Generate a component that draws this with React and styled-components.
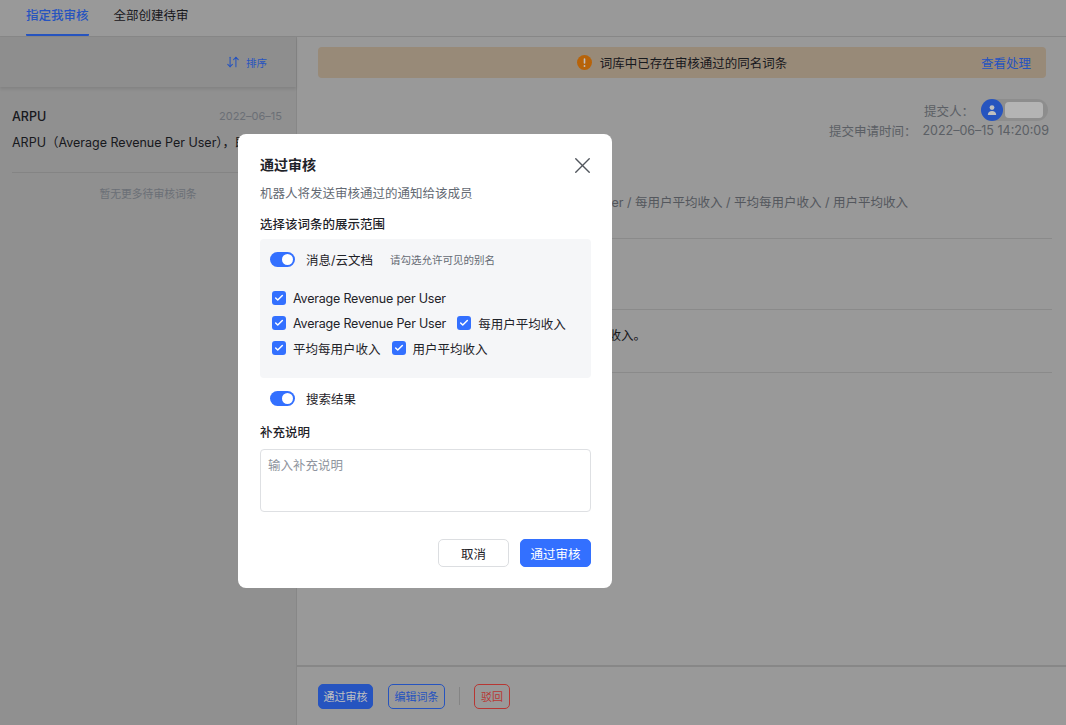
import React from "react";
import styled, { createGlobalStyle } from "styled-components";
import { X, Check, ArrowDownUp } from "lucide-react";

const Global = createGlobalStyle`
  html, body { margin: 0; padding: 0; height: 100%; background: #ccc; }
  body { font-family: "Inter", "Noto Sans CJK SC", "Liberation Sans", sans-serif; color: #1f2329; }
  * { box-sizing: border-box; }
`;

const Page = styled.div`
  width: 1066px;
  height: 725px;
  overflow: hidden;
  position: relative;
  display: flex;
  flex-direction: column;
  background: #ccc;
`;
const Header = styled.header`
  height: 37px;
  flex: none;
  display: flex;
  gap: 25px;
  padding-left: 26px;
  border-bottom: 1px solid #b4b4b4;
`;
const Tab = styled.div`
  height: 36px;
  padding-top: 7px;
  font-size: 12.5px;
  line-height: 17px;
  color: ${(p) => (p.$active ? "#3370ff" : "#1f2329")};
  font-weight: ${(p) => (p.$active ? 500 : 400)};
  border-bottom: 2px solid ${(p) => (p.$active ? "#3370ff" : "transparent")};
  border-radius: 0 0 1px 1px;
`;
const Body = styled.div`
  flex: 1;
  display: flex;
  min-height: 0;
`;
const Sidebar = styled.aside`
  width: 297px;
  flex: none;
  background: #c0c0c0;
  border-right: 1px solid #b4b4b4;
`;
const SortBar = styled.div`
  height: 50px;
  display: flex;
  justify-content: flex-end;
  align-items: center;
  gap: 6px;
  padding-right: 29px;
  color: #3370ff;
  font-size: 10.5px;
  background: #bebebe;
  box-shadow: 0 2px 3px rgba(0, 0, 0, 0.1);
`;
const Entry = styled.div`
  margin: 0 14px 0 12px;
  padding-top: 20px;
  height: 86px;
  border-bottom: 1px solid #b0b0b0;
`;
const EntryTop = styled.div`
  display: flex;
  justify-content: space-between;
  align-items: center;
  height: 18px;
`;
const EntryName = styled.span`
  font-size: 12.5px;
  font-weight: 500;
`;
const EntryDate = styled.span`
  font-size: 11px;
  color: #8f959e;
`;
const EntryDesc = styled.div`
  margin-top: 9px;
  font-size: 12.5px;
  line-height: 18px;
  white-space: nowrap;
`;
const NoMore = styled.div`
  text-align: center;
  font-size: 10.8px;
  color: #8f959e;
  margin-top: 12px;
`;
const Main = styled.main`
  flex: 1;
  min-width: 0;
  display: flex;
  flex-direction: column;
`;
const Content = styled.div`
  flex: 1;
  padding: 10px 20px 0 21px;
`;
const Alert = styled.div`
  height: 31px;
  border-radius: 4px;
  background: #cbb8a1;
  display: flex;
  align-items: center;
  justify-content: center;
  position: relative;
  gap: 8px;
  font-size: 12.5px;
`;
const AlertLink = styled.a`
  position: absolute;
  right: 15px;
  color: #3370ff;
`;
const Meta = styled.div`
  display: flex;
  flex-direction: column;
  align-items: flex-end;
  margin-top: 21px;
  margin-right: -3px;
  font-size: 12.5px;
  color: #7a7f87;
`;
const MetaRow = styled.div`
  display: flex;
  align-items: center;
  height: ${(p) => p.$h}px;
  gap: ${(p) => p.$gap}px;
`;
const Submitter = styled.div`
  width: 67px;
  height: 22px;
  margin-right: 1px;
  border-radius: 11px;
  background: #bdbdbd;
  display: flex;
  align-items: center;
  gap: 2px;
  padding-right: 5px;
`;
const Avatar = styled.div`
  width: 22px;
  height: 22px;
  border-radius: 50%;
  background: #3370ff;
  display: flex;
  align-items: center;
  justify-content: center;
  flex: none;
`;
const Redacted = styled.div`
  flex: 1;
  height: 16px;
  border-radius: 4px;
  background: #f1f1f1;
`;
const Field = styled.div`
  height: ${(p) => p.$h}px;
  margin-right: -6px;
  border-bottom: 1px solid #b8b8b8;
  display: flex;
  justify-content: flex-end;
  white-space: nowrap;
  font-size: 12.5px;
  line-height: 18px;
  color: ${(p) => p.$color || "#1f2329"};
  padding-top: ${(p) => p.$top || 0}px;
  padding-right: ${(p) => p.$right || 0}px;
`;
const Footer = styled.footer`
  height: 60px;
  flex: none;
  border-top: 2px solid #b4b4b4;
  display: flex;
  align-items: center;
  padding: 0 0 0 21px;
`;
const FootBtn = styled.button`
  height: 25px;
  padding: 0;
  width: ${(p) => p.$w}px;
  margin-left: ${(p) => p.$ml || 0}px;
  border-radius: 5px;
  font: inherit;
  font-size: 11px;
  background: ${(p) => (p.$kind === "primary" ? "#3370ff" : "transparent")};
  color: ${(p) => (p.$kind === "primary" ? "#fff" : p.$kind === "danger" ? "#f54a45" : "#3370ff")};
  border: 1.5px solid ${(p) => (p.$kind === "danger" ? "#f54a45" : "#3370ff")};
`;
const FootSep = styled.div`
  width: 1px;
  height: 18px;
  background: #b0b0b0;
  margin: 0 14px;
`;
const Backdrop = styled.div`
  position: absolute;
  inset: 0;
  background: rgba(0, 0, 0, 0.25);
`;
const Modal = styled.div`
  position: absolute;
  left: 238px;
  top: 134px;
  width: 374px;
  height: 454px;
  background: #fff;
  border-radius: 8px;
  padding: 20px 21px 0 22px;
  display: flex;
  flex-direction: column;
`;
const ModalHead = styled.div`
  display: flex;
  justify-content: space-between;
  align-items: center;
  height: 20px;
`;
const ModalTitle = styled.div`
  font-size: 14px;
  font-weight: 600;
`;
const CloseBtn = styled.button`
  border: 0;
  background: none;
  padding: 0;
  margin: 2px -4.5px 0 0;
  display: flex;
  color: #51565d;
`;
const ModalDesc = styled.div`
  font-size: 12.5px;
  line-height: 18px;
  color: #646a73;
  margin-top: 11px;
`;
const SectionLabel = styled.div`
  font-size: 12.5px;
  line-height: 18px;
  font-weight: 500;
  margin-top: ${(p) => p.$mt}px;
`;
const Panel = styled.div`
  margin-top: 5px;
  height: 139px;
  background: #f5f6f8;
  border-radius: 4px;
  padding: 11px 10px 0 10px;
`;
const ToggleRow = styled.div`
  display: flex;
  align-items: center;
  height: 18px;
  font-size: 12.5px;
  margin-left: ${(p) => p.$ml || 0}px;
  margin-top: ${(p) => p.$mt || 0}px;
`;
const Toggle = styled.div`
  width: 25px;
  height: 15px;
  border-radius: 8px;
  background: #3370ff;
  display: flex;
  justify-content: flex-end;
  align-items: center;
  padding-right: 2px;
  margin-right: 11px;
  &::after {
    content: "";
    width: 11px;
    height: 11px;
    border-radius: 50%;
    background: #fff;
  }
`;
const Hint = styled.span`
  font-size: 10.5px;
  color: #646a73;
  margin-left: 17px;
`;
const CheckGrid = styled.div`
  margin-top: 21px;
  margin-left: 2px;
  display: flex;
  flex-direction: column;
  gap: 7px;
`;
const CheckRow = styled.div`
  display: flex;
  align-items: center;
  gap: 11px;
  height: 18px;
`;
const CheckItem = styled.label`
  display: flex;
  align-items: center;
  gap: 7px;
  font-size: 12.5px;
  white-space: nowrap;
  letter-spacing: ${(p) => (p.$latin ? "-0.2px" : "0")};
`;
const Box = styled.span`
  width: 14px;
  height: 14px;
  border-radius: 3px;
  background: #3370ff;
  color: #fff;
  display: flex;
  align-items: center;
  justify-content: center;
`;
const TextBox = styled.textarea`
  margin-top: 7px;
  height: 63px;
  width: 100%;
  flex: none;
  resize: none;
  border: 1px solid #dee0e3;
  border-radius: 4px;
  padding: 8px 7px;
  font: inherit;
  font-size: 12.5px;
  line-height: 16px;
  outline: none;
  &::placeholder { color: #8f959e; }
`;
const ModalFoot = styled.div`
  display: flex;
  justify-content: flex-end;
  gap: 11px;
  margin-top: 27px;
`;
const ModalBtn = styled.button`
  width: 71px;
  height: 28px;
  padding: 0;
  border-radius: 5px;
  font: inherit;
  font-size: 12.5px;
  background: ${(p) => (p.$primary ? "#3370ff" : "#fff")};
  color: ${(p) => (p.$primary ? "#fff" : "#1f2329")};
  border: 1.5px solid ${(p) => (p.$primary ? "#3370ff" : "#dcdee1")};
`;

const Checked = ({ children, latin }) => (
  <CheckItem $latin={latin}>
    <Box><Check size={10} strokeWidth={3.5} /></Box>
    {children}
  </CheckItem>
);

export default function App() {
  return (
    <Page>
      <Global />
      <Header>
        <Tab $active>指定我审核</Tab>
        <Tab>全部创建待审</Tab>
      </Header>
      <Body>
        <Sidebar>
          <SortBar><ArrowDownUp size={14} strokeWidth={1.8} />排序</SortBar>
          <Entry>
            <EntryTop>
              <EntryName>ARPU</EntryName>
              <EntryDate>2022–06–15</EntryDate>
            </EntryTop>
            <EntryDesc>ARPU（Average Revenue Per User），即每用户平均收入。</EntryDesc>
          </Entry>
          <NoMore>暂无更多待审核词条</NoMore>
        </Sidebar>
        <Main>
          <Content>
            <Alert>
              <svg width="15" height="15" viewBox="0 0 15 15">
                <circle cx="7.5" cy="7.5" r="7.5" fill="#f5840c" />
                <rect x="6.7" y="3.2" width="1.6" height="5.6" rx="0.8" fill="#fff" />
                <circle cx="7.5" cy="11" r="0.95" fill="#fff" />
              </svg>
              词库中已存在审核通过的同名词条
              <AlertLink>查看处理</AlertLink>
            </Alert>
            <Meta>
              <MetaRow $h="22" $gap="7">
                提交人：
                <Submitter>
                  <Avatar>
                    <svg width="12" height="12" viewBox="0 0 12 12" fill="#fff">
                      <circle cx="6" cy="3.6" r="2.4" />
                      <path d="M1.8 11c0-2.6 1.8-4 4.2-4s4.2 1.4 4.2 4z" />
                    </svg>
                  </Avatar>
                  <Redacted />
                </Submitter>
              </MetaRow>
              <MetaRow $h="19" $gap="6">提交申请时间：<span>2022–06–15 14:20:09</span></MetaRow>
            </Meta>
            <Field $h="99" $top="54" $right="144" $color="#70757d">Average Revenue per User / Average Revenue Per User / 每用户平均收入 / 平均每用户收入 / 用户平均收入</Field>
            <Field $h="71" />
            <Field $h="63" $top="17" $right="406">ARPU（Average Revenue Per User），即每用户平均收入。</Field>
          </Content>
          <Footer>
            <FootBtn $kind="primary" $w="55">通过审核</FootBtn>
            <FootBtn $w="57" $ml="15">编辑词条</FootBtn>
            <FootSep />
            <FootBtn $kind="danger" $w="36">驳回</FootBtn>
          </Footer>
        </Main>
      </Body>
      <Backdrop />
      <Modal>
        <ModalHead>
          <ModalTitle>通过审核</ModalTitle>
          <CloseBtn><X size={27} strokeWidth={1.25} /></CloseBtn>
        </ModalHead>
        <ModalDesc>机器人将发送审核通过的通知给该成员</ModalDesc>
        <SectionLabel $mt="13">选择该词条的展示范围</SectionLabel>
        <Panel>
          <ToggleRow>
            <Toggle />消息/云文档<Hint>请勾选允许可见的别名</Hint>
          </ToggleRow>
          <CheckGrid>
            <CheckRow><Checked latin>Average Revenue per User</Checked></CheckRow>
            <CheckRow>
              <Checked latin>Average Revenue Per User</Checked>
              <Checked>每用户平均收入</Checked>
            </CheckRow>
            <CheckRow>
              <Checked>平均每用户收入</Checked>
              <Checked>用户平均收入</Checked>
            </CheckRow>
          </CheckGrid>
        </Panel>
        <ToggleRow $ml="10" $mt="11"><Toggle />搜索结果</ToggleRow>
        <SectionLabel $mt="17">补充说明</SectionLabel>
        <TextBox placeholder="输入补充说明" />
        <ModalFoot>
          <ModalBtn>取消</ModalBtn>
          <ModalBtn $primary>通过审核</ModalBtn>
        </ModalFoot>
      </Modal>
    </Page>
  );
}
